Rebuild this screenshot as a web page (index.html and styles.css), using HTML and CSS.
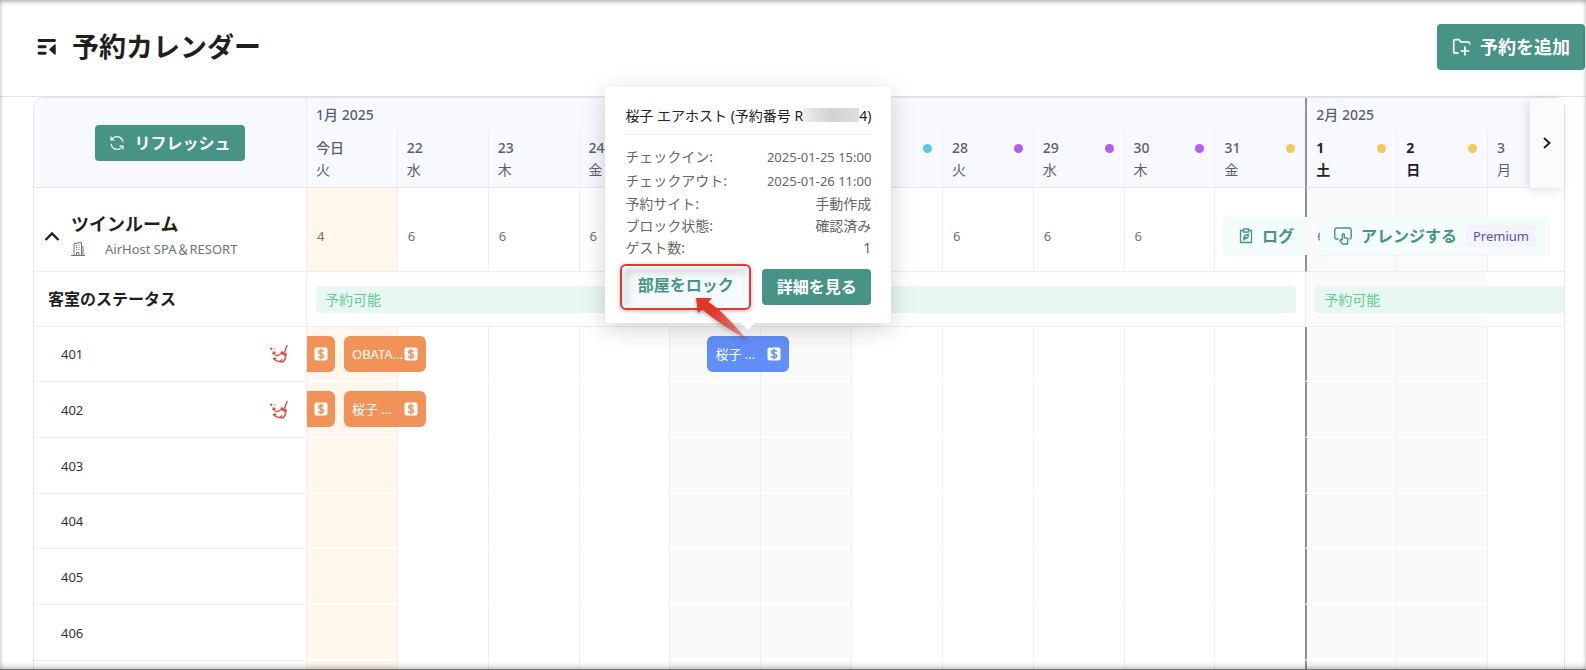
FILE: index.html
```html
<!DOCTYPE html>
<html lang="ja">
<head>
<meta charset="utf-8">
<meta name="viewport" content="width=device-width, initial-scale=1">
<title>予約カレンダー</title>
<link rel="stylesheet" href="styles.css">
</head>
<body>
<svg class="sprite" aria-hidden="true">
  <symbol id="i-pay" viewBox="0 0 14 14"><rect x="0.5" y="0.5" width="13" height="13" rx="2" fill="#fff"/><path d="M9.8 4.6C9.4 3.7 8.4 3.4 7 3.4 5.400 3.400 4.400 4 4.400 5.100 4.400 7.500 9.700 6.300 9.700 8.900 9.700 10 8.600 10.600 7 10.600 5.500 10.600 4.500 10.200 4.100 9.200M7 1.800V12.200" fill="none" stroke="currentColor" stroke-width="1.500"/></symbol>
  <symbol id="i-broom" viewBox="0 0 20 20"><path d="M18.200 1 15.500 8M6 11.500C9 12 11.500 10.500 12.800 8L17 9.800C17 13 15.800 16 14 18 10.500 18 6.500 16.800 4 14.200M12 9.300 16.800 11.500M4 14.200 7.500 14.500M11 17.600 13 15.500" fill="none" stroke="currentColor" stroke-width="1.500"/><circle cx="5" cy="9" r="1.700" fill="currentColor"/><circle cx="2.300" cy="4.800" r="1.200" fill="currentColor"/><circle cx="6" cy="5" r=".7" fill="currentColor"/></symbol>
</svg>

<header class="topbar">
  <button class="menu-toggle" type="button" aria-label="メニュー">
    <svg width="20" height="18" viewBox="0 0 20 18"><path d="M2 2.500H17.500M2 8.800H8.200M2 15.200H8.200" stroke="#1f1f1f" stroke-width="2.900" stroke-linecap="round"/><path d="M13 11.500 18 7V16Z" fill="#1f1f1f" stroke="#1f1f1f" stroke-width="1.500" stroke-linejoin="round"/></svg>
  </button>
  <h1 class="title">予約カレンダー</h1>
  <button class="btn btn-add" type="button">
    <svg width="20" height="20" viewBox="0 0 20 20" fill="none" stroke="currentColor" stroke-width="1.700"><path d="M6.500 16.200H3.200C2.300 16.200 1.700 15.600 1.700 14.800V4.200C1.700 3.300 2.300 2.600 3.200 2.600H6.800L9 5H16.200C17.100 5 17.700 5.600 17.700 6.400V7.500M13 9.500V18.500M8.800 14H17.200"/></svg>
    予約を追加
  </button>
</header>

<main class="calendar">
  <table class="grid">
    <colgroup><col class="col-room"><col span="13"><col class="col-cut"></colgroup>
    <thead>
      <tr class="months">
        <th class="corner" rowspan="2">
          <button class="btn btn-refresh" type="button">
            <svg width="16" height="16" viewBox="0 0 16 16" fill="none" stroke="currentColor" stroke-width="1.200"><path d="M2 1.500V5H5.500M2.300 5C4.300 1.200 9.500.5 12.300 3.500 13.300 4.600 13.900 5.800 14 7.300M14 14.500V11H10.500M13.700 11C11.700 14.800 6.500 15.500 3.700 12.500 2.700 11.400 2.100 10.200 2 8.700"/></svg>
            リフレッシュ
          </button>
        </th>
        <th class="month" colspan="11">1月 2025</th>
        <th class="month feb" colspan="3">2月 2025</th>
      </tr>
      <tr class="days">
        <th>今日<small>火</small></th>
        <th>22<small>水</small></th>
        <th>23<small>木</small></th>
        <th>24<small>金</small></th>
        <th></th>
        <th></th>
        <th><i class="dot cyan"></i></th>
        <th><i class="dot violet"></i>28<small>火</small></th>
        <th><i class="dot violet"></i>29<small>水</small></th>
        <th><i class="dot violet"></i>30<small>木</small></th>
        <th><i class="dot yellow"></i>31<small>金</small></th>
        <th class="feb strong"><i class="dot yellow"></i>1<small>土</small></th>
        <th class="strong"><i class="dot yellow"></i>2<small>日</small></th>
        <th>3<small>月</small></th>
      </tr>
    </thead>
    <tbody>
      <tr class="type-row">
        <th>
          <div class="room-type">
            <button class="collapse" type="button" aria-label="折りたたむ"><svg width="18" height="12" viewBox="0 0 18 12"><path d="M2.500 10 9 3.500 15.500 10" fill="none" stroke="#1f1f1f" stroke-width="2.400"/></svg></button>
            <div>
              <div class="type-name">ツインルーム</div>
              <div class="hotel">
                <svg width="14" height="14" viewBox="0 0 14 14" fill="none" stroke="currentColor"><path d="M0 13.500H14M3 13.500V1.500L10.500.5V13.500M10.500 5H12V13.500M5.500 13V10.500H8V13M5 3.500H6M7.500 3.500H8.500M5 5.500H6M7.500 5.500H8.500M5 7.500H6M7.500 7.500H8.500"/></svg>
                AirHost SPA＆RESORT
              </div>
            </div>
          </div>
        </th>
        <td class="today">4</td><td>6</td><td>6</td><td>6</td><td></td><td></td><td></td><td>6</td><td>6</td><td>6</td><td></td><td class="feb weekend">6</td><td class="weekend"></td>
        <td class="actions-cell">
          <div class="actions">
            <button class="btn btn-soft" type="button">
              <svg width="14" height="16" viewBox="0 0 14 16" fill="none" stroke="currentColor" stroke-width="1.300"><path d="M4 2.500H1.500V14.500H12.500V2.500H10M4.500 1H9.500V4H4.500ZM4.800 11.200C4.500 8.500 6 6.800 9.300 6.500 9.500 9 8.300 10.900 5.800 10.700M4.300 12.500 7.200 9"/></svg>
              ログ
            </button>
            <button class="btn btn-soft btn-arrange" type="button">
              <svg width="18" height="18" viewBox="0 0 18 18" fill="none" stroke="currentColor" stroke-width="1.400"><path d="M4.500 12H2.500C1.500 12 .8 11.200.8 10.200V2.800C.8 1.800 1.500 1 2.500 1H15.500C16.500 1 17.200 1.800 17.200 2.800V10.200C17.200 11.200 16.500 12 15.500 12M8.300 12.500V7.800C8.300 6.300 10.300 6.300 10.300 7.800V10.700L13 11.300C13.800 11.500 14 12 13.900 12.800L13.300 17H8.500L6 13.500C6.300 12.300 7.500 12.200 8.300 13.300"/></svg>
              アレンジする
              <span class="tag">Premium</span>
            </button>
          </div>
        </td>
      </tr>
      <tr class="status-row">
        <th>客室のステータス</th>
        <td colspan="11"><div class="status">予約可能</div></td>
        <td class="weekend-span" colspan="3"><div class="status open">予約可能</div></td>
      </tr>
      <tr class="room">
        <th><div class="room-name">401<svg class="broom" width="20" height="20"><use href="#i-broom"/></svg></div></th>
        <td class="today">
          <div class="booking past"><svg width="14" height="14"><use href="#i-pay"/></svg></div>
          <div class="booking"><span>OBATA...</span><svg width="14" height="14"><use href="#i-pay"/></svg></div>
        </td>
        <td></td><td></td><td></td>
        <td class="weekend">
          <div class="booking blue"><span>桜子 ...</span><svg width="14" height="14"><use href="#i-pay"/></svg>
            <section class="popover">
              <h2>桜子 エアホスト (予約番号 R<span class="redacted"></span>4)</h2>
              <dl>
                <div><dt>チェックイン:</dt><dd><time>2025-01-25 15:00</time></dd></div>
                <div><dt>チェックアウト:</dt><dd><time>2025-01-26 11:00</time></dd></div>
                <div><dt>予約サイト:</dt><dd>手動作成</dd></div>
                <div><dt>ブロック状態:</dt><dd>確認済み</dd></div>
                <div><dt>ゲスト数:</dt><dd>1</dd></div>
              </dl>
              <div class="popover-actions">
                <button class="btn btn-lock" type="button">部屋をロック</button>
                <button class="btn btn-detail" type="button">詳細を見る</button>
              </div>
              <svg class="pointer" width="54" height="46" viewBox="0 0 54 46"><defs><linearGradient id="fade" x1="0" y1="0" x2="1" y2="1"><stop offset=".3" stop-color="#e0352b"/><stop offset="1" stop-color="#e0352b" stop-opacity=".35"/></linearGradient></defs><path d="M0 1 16 1 12.500 5C25 13 39 28 53 45 38 34 20 25 6 12L2 16Z" fill="url(#fade)"/></svg>
            </section>
          </div>
        </td>
        <td class="weekend"></td><td></td><td></td><td></td><td></td><td></td><td class="feb weekend"></td><td class="weekend"></td><td></td>
      </tr>
      <tr class="room">
        <th><div class="room-name">402<svg class="broom" width="20" height="20"><use href="#i-broom"/></svg></div></th>
        <td class="today">
          <div class="booking past"><svg width="14" height="14"><use href="#i-pay"/></svg></div>
          <div class="booking"><span>桜子 ...</span><svg width="14" height="14"><use href="#i-pay"/></svg></div>
        </td>
        <td></td><td></td><td></td><td class="weekend"></td><td class="weekend"></td><td></td><td></td><td></td><td></td><td></td><td class="feb weekend"></td><td class="weekend"></td><td></td>
      </tr>
      <tr class="room"><th><div class="room-name">403</div></th><td class="today"></td><td></td><td></td><td></td><td class="weekend"></td><td class="weekend"></td><td></td><td></td><td></td><td></td><td></td><td class="feb weekend"></td><td class="weekend"></td><td></td></tr>
      <tr class="room"><th><div class="room-name">404</div></th><td class="today"></td><td></td><td></td><td></td><td class="weekend"></td><td class="weekend"></td><td></td><td></td><td></td><td></td><td></td><td class="feb weekend"></td><td class="weekend"></td><td></td></tr>
      <tr class="room"><th><div class="room-name">405</div></th><td class="today"></td><td></td><td></td><td></td><td class="weekend"></td><td class="weekend"></td><td></td><td></td><td></td><td></td><td></td><td class="feb weekend"></td><td class="weekend"></td><td></td></tr>
      <tr class="room"><th><div class="room-name">406</div></th><td class="today"></td><td></td><td></td><td></td><td class="weekend"></td><td class="weekend"></td><td></td><td></td><td></td><td></td><td></td><td class="feb weekend"></td><td class="weekend"></td><td></td></tr>
      <tr class="tail"><th></th><td class="today"></td><td></td><td></td><td></td><td class="weekend"></td><td class="weekend"></td><td></td><td></td><td></td><td></td><td></td><td class="feb weekend"></td><td class="weekend"></td><td></td></tr>
    </tbody>
  </table>
  <button class="next" type="button" aria-label="次へ"><svg width="12" height="14" viewBox="0 0 12 14"><path d="M3 2 8.500 7 3 12" fill="none" stroke="#222" stroke-width="2"/></svg></button>
</main>
<div class="frame"></div>
</body>
</html>
```

FILE: styles.css
```css
* { box-sizing: border-box; }

body {
  margin: 0;
  background: #fff;
  color: #1f1f1f;
  font: 13px/20px "Noto Sans", "Noto Sans CJK JP", sans-serif;
}

button { font: inherit; color: inherit; border: 0; background: none; padding: 0; }
svg { display: block; flex: none; }
.sprite { position: absolute; width: 0; height: 0; }

/* Top bar */
.topbar {
  display: flex;
  align-items: center;
  height: 97px;
  padding: 0 1px 2px 37px;
  border-bottom: 1px solid #e2e2e4;
}
.title { flex: 1; margin: 0 0 0 15px; font-size: 27px; line-height: 36px; font-weight: 700; }

.btn {
  display: inline-flex;
  align-items: center;
  justify-content: center;
  border-radius: 4px;
  background: #479486;
  color: #fff;
  font-size: 16px;
  font-weight: 700;
  white-space: nowrap;
}
.btn-add { gap: 8px; height: 46px; padding: 0 15px; font-size: 18px; }
.btn-refresh { gap: 9px; height: 36px; padding: 0 14px; }

/* Calendar grid */
.calendar {
  position: relative;
  margin: 0 21px 0 33px;
  border: solid #e6e7ea;
  border-width: 1px 1px 0;
  border-radius: 10px 10px 0 0;
}
.grid { width: 100%; table-layout: fixed; border-collapse: separate; border-spacing: 0; }
.col-room { width: 272px; }
.col-cut { width: 77px; }
th, td { padding: 0; text-align: left; font-weight: 400; border-left: 1px solid #eeeef0; }
tr > th:first-child { border-left: 0; }
.days th:first-child { border-left: 1px solid #eeeef0; }

thead th { background: #f8f9ff; color: #596170; }
.corner { border-bottom: 1px solid #e6e7ea; border-radius: 10px 0 0 0; text-align: center; }
.month { height: 32px; padding: 2px 0 0 9px; font-size: 14px; font-weight: 500; }
.days th {
  height: 58px;
  padding: 7px 0 0 9px;
  border-bottom: 1px solid #e6e7ea;
  vertical-align: top;
  font-size: 14px;
  line-height: 22px;
  font-weight: 500;
}
.days small { display: block; font-size: 14px; font-weight: 400; }
.days .strong, .days .strong small { color: #1f1f1f; font-weight: 700; }
.dot { float: right; width: 9px; height: 9px; margin: 7px 10px 0 0; border-radius: 50%; }
.cyan { background: #56cbdd; }
.violet { background: #b45cf5; }
.yellow { background: #f3c958; }

.feb, tr > .feb { border-left: 2px solid #8f919a; }
tbody th, tbody td { border-bottom: 1px solid #eeeef0; }
.today { background: #fff7eb; }
.weekend { background: #fafafa; }

.type-row { height: 84px; }
.type-row td { padding: 13px 0 0 10px; color: #6b7280; }
.room-type { display: flex; align-items: center; gap: 10px; padding: 12px 0 0 9px; }
.type-name { font-size: 18px; line-height: 26px; font-weight: 700; }
.hotel { display: flex; align-items: center; gap: 20px; line-height: 24px; color: #6b7280; white-space: nowrap; }

.actions-cell { position: relative; }
.actions { position: absolute; right: 14px; top: 29px; display: flex; gap: 10px; }
.btn-soft { gap: 9px; height: 38px; padding: 0 16px; background: #f4fbfb; color: #479486; box-shadow: 0 1px 2px #0000000a; }
.btn-arrange { padding: 0 14px; }
.tag { padding: 1px 7px; border-radius: 4px; background: #f5f3fd; color: #5b4fb5; font-size: 13px; font-weight: 400; }

.status-row { height: 55px; }
.status-row th { padding-left: 14px; font-size: 16px; font-weight: 700; }
.status { height: 27px; margin: 0 9px; padding: 4px 9px; border-radius: 4px; background: #e8f7f2; color: #66cb94; font-size: 14px; }
.open { margin-right: 0; border-radius: 4px 0 0 4px; }
.weekend-span { background: linear-gradient(90deg, #fafafa 70%, #fff 70%); }

.room { height: 56px; }
.room:nth-child(3n) { height: 55px; }
.room td { position: relative; border-bottom: 2px solid #fff; }
.tail { height: 9px; }
.tail > * { border-bottom: 0; }
.room-name { display: flex; justify-content: space-between; padding: 0 17px 0 27px; color: #333; }
.broom { color: #e0504a; }

/* Bookings */
.booking {
  position: absolute;
  z-index: 1;
  top: 9px;
  left: 37px;
  display: flex;
  align-items: center;
  justify-content: space-between;
  width: 82px;
  height: 36px;
  padding: 0 8px;
  border-radius: 6px;
  background: #f19359;
  color: #fff;
  white-space: nowrap;
}
.booking svg { color: #f19359; }
.past { left: 0; width: 28px; padding: 0 7px; border-radius: 0 6px 6px 0; }
.blue { z-index: 3; background: #628ef8; }
.blue > svg { color: #628ef8; }

/* Booking popover */
.popover {
  position: absolute;
  left: 50%;
  bottom: calc(100% + 13px);
  width: 286px;
  padding: 19px 20px 13px;
  transform: translateX(-50%);
  border-radius: 4px;
  background: #fff;
  box-shadow: 0 6px 24px #0000002e;
  color: #666;
}
.popover::after {
  content: "";
  position: absolute;
  left: 50%;
  top: 100%;
  margin-left: -7px;
  border: 7px solid transparent;
  border-top-color: #fff;
  border-bottom: 0;
}
.popover h2 { display: flex; margin: 0; padding-bottom: 8px; border-bottom: 1px solid #f0f0f0; color: #222; font-size: 14px; line-height: 20px; font-weight: 400; white-space: pre; }
.redacted { flex: 1; height: 14px; margin-top: 2px; background: linear-gradient(90deg, #eee, #d2d2d2, #ddd); }
dl { margin: 10px 0 5px; font-size: 14px; }
dl div { display: flex; justify-content: space-between; line-height: 23px; }
dl div:nth-child(n+3) { line-height: 22px; }
dd { margin: 0; }
time { font-size: 13px; }
.popover-actions { display: flex; justify-content: space-between; align-items: center; margin-left: -5px; }
.btn-lock { width: 131px; height: 46px; padding-bottom: 4px; border: 2px solid #e23a30; border-radius: 6px; background: #f5fbfb; color: #479486; box-shadow: inset 0 0 4px 2px #fff, inset 3px 4px 8px 2px #00000029, 0 1px 4px #0000004d; }
.btn-detail { width: 109px; height: 36px; }
.popover .pointer { position: absolute; left: 91px; bottom: -20px; z-index: 2; filter: drop-shadow(0 2px 2px #0004); }

/* Pager */
.next {
  position: absolute;
  top: 0;
  right: 0;
  display: flex;
  align-items: center;
  justify-content: center;
  width: 34px;
  height: 90px;
  border-radius: 0 8px 0 0;
  background: #fafbfd;
  box-shadow: -2px 2px 10px #0000001f;
}

/* Window edge */
.frame {
  position: fixed;
  inset: 0;
  z-index: 9;
  pointer-events: none;
  border-bottom: 1px solid #777;
  box-shadow: inset 0 3px 4px -1px #0000003d, inset 0 -5px 6px -3px #00000033, inset 0 0 5px #00000026;
}
```
